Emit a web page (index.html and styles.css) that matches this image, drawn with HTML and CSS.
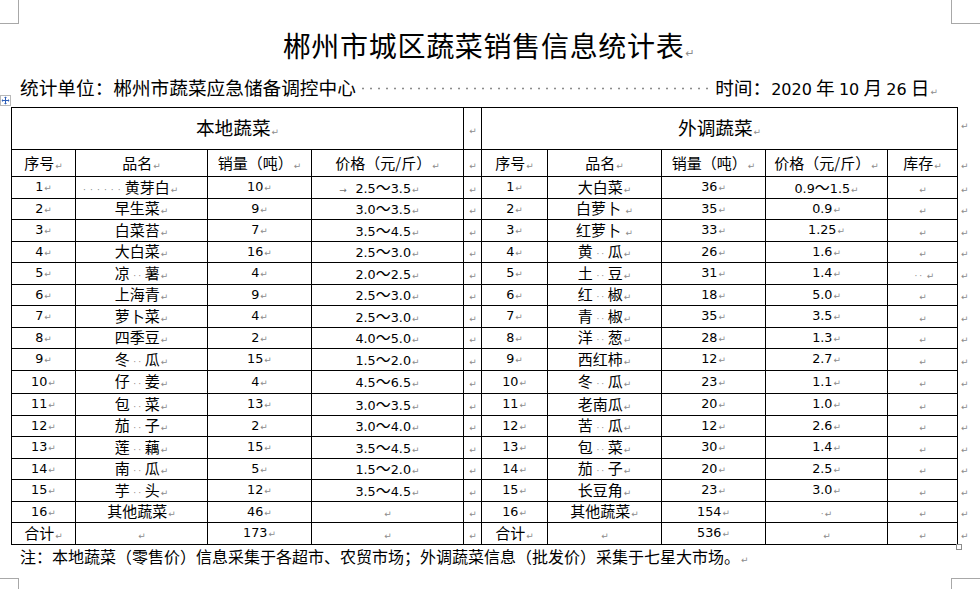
FILE: index.html
```html
<!DOCTYPE html>
<html lang="zh">
<head>
<meta charset="utf-8">
<title>郴州市城区蔬菜销售信息统计表</title>
<link rel="stylesheet" href="styles.css">
</head>
<body>
<div class="page">
  <div class="crop tl"></div>
  <div class="crop tr"></div>
  <div class="crop bl"></div>
  <div class="crop br"></div>

  <h1 class="title">郴州市城区蔬菜销售信息统计表<i class="m mt">↵</i></h1>

  <div class="info">
    <span class="unit">统计单位：郴州市蔬菜应急储备调控中心</span>
    <span class="dots"></span>
    <span class="date">时间：<span class="num">2020</span> 年 <span class="num">10</span> 月 <span class="num">26</span> 日<i class="m">↵</i></span>
  </div>

  <svg class="handle" viewBox="0 0 11 11" width="11" height="11" aria-hidden="true">
    <rect x="0.5" y="0.5" width="10" height="10" fill="#fff" stroke="#b9b9b9"/>
    <path d="M5.5 2.5v6M2.5 5.5h6" stroke="#2f5fb8" stroke-width="1" fill="none"/>
    <path d="M5.5 1.5L4 3h3zM5.5 9.5L4 8h3zM1.5 5.5L3 4v3zM9.5 5.5L8 4v3z" fill="#2f5fb8"/>
  </svg>

  <table class="tbl">
    <colgroup>
      <col class="c1"><col class="c2"><col class="c3"><col class="c4"><col class="c5">
      <col class="c6"><col class="c7"><col class="c8"><col class="c9"><col class="c10"><col class="c11">
    </colgroup>
    <tr class="h1">
      <td colspan="4" class="big">本地蔬菜<i class="m">↵</i></td>
      <td><i class="m">↵</i></td>
      <td colspan="5" class="big">外调蔬菜<i class="m">↵</i></td>
      <td class="e top"><i class="m">↵</i></td>
    </tr>
    <tr class="h2">
      <td>序号<i class="m">↵</i></td><td>品名<i class="m">↵</i></td><td>销量（吨）<i class="m">↵</i></td><td>价格（元/斤）<i class="m">↵</i></td>
      <td><i class="m">↵</i></td>
      <td>序号<i class="m">↵</i></td><td>品名<i class="m">↵</i></td><td>销量（吨）<i class="m">↵</i></td><td>价格（元/斤）<i class="m">↵</i></td><td>库存<i class="m">↵</i></td>
      <td class="e"><i class="m">↵</i></td>
    </tr>
    <tr class="r">
      <td class="n">1<i class="m">↵</i></td><td class="lft"><span class="lead">······</span>黄芽白<i class="m">↵</i></td><td class="n">10<i class="m">↵</i></td><td class="n"><span class="tab">→</span>2.5<span class="t">～</span>3.5<i class="m">↵</i></td>
      <td><i class="m">↵</i></td>
      <td class="n">1<i class="m">↵</i></td><td>大白菜<i class="m">↵</i></td><td class="n">36<i class="m">↵</i></td><td class="n">0.9<span class="t">～</span>1.5<i class="m">↵</i></td><td><i class="m">↵</i></td>
      <td class="e"><i class="m">↵</i></td>
    </tr>
    <tr class="r">
      <td class="n">2<i class="m">↵</i></td><td>早生菜<i class="m">↵</i></td><td class="n">9<i class="m">↵</i></td><td class="n">3.0<span class="t">～</span>3.5<i class="m">↵</i></td>
      <td><i class="m">↵</i></td>
      <td class="n">2<i class="m">↵</i></td><td>白萝卜 <i class="m">↵</i></td><td class="n">35<i class="m">↵</i></td><td class="n">0.9<i class="m">↵</i></td><td><i class="m">↵</i></td>
      <td class="e"><i class="m">↵</i></td>
    </tr>
    <tr class="r">
      <td class="n">3<i class="m">↵</i></td><td>白菜苔<i class="m">↵</i></td><td class="n">7<i class="m">↵</i></td><td class="n">3.5<span class="t">～</span>4.5<i class="m">↵</i></td>
      <td><i class="m">↵</i></td>
      <td class="n">3<i class="m">↵</i></td><td>红萝卜 <i class="m">↵</i></td><td class="n">33<i class="m">↵</i></td><td class="n">1.25<i class="m">↵</i></td><td><i class="m">↵</i></td>
      <td class="e"><i class="m">↵</i></td>
    </tr>
    <tr class="r">
      <td class="n">4<i class="m">↵</i></td><td>大白菜<i class="m">↵</i></td><td class="n">16<i class="m">↵</i></td><td class="n">2.5<span class="t">～</span>3.0<i class="m">↵</i></td>
      <td><i class="m">↵</i></td>
      <td class="n">4<i class="m">↵</i></td><td>黄<span class="s">··</span>瓜<i class="m">↵</i></td><td class="n">26<i class="m">↵</i></td><td class="n">1.6<i class="m">↵</i></td><td><i class="m">↵</i></td>
      <td class="e"><i class="m">↵</i></td>
    </tr>
    <tr class="r">
      <td class="n">5<i class="m">↵</i></td><td>凉<span class="s">··</span>薯<i class="m">↵</i></td><td class="n">4<i class="m">↵</i></td><td class="n">2.0<span class="t">～</span>2.5<i class="m">↵</i></td>
      <td><i class="m">↵</i></td>
      <td class="n">5<i class="m">↵</i></td><td>土<span class="s">··</span>豆<i class="m">↵</i></td><td class="n">31<i class="m">↵</i></td><td class="n">1.4<i class="m">↵</i></td><td><span class="s">··</span><i class="m">↵</i></td>
      <td class="e"><i class="m">↵</i></td>
    </tr>
    <tr class="r">
      <td class="n">6<i class="m">↵</i></td><td>上海青<i class="m">↵</i></td><td class="n">9<i class="m">↵</i></td><td class="n">2.5<span class="t">～</span>3.0<i class="m">↵</i></td>
      <td><i class="m">↵</i></td>
      <td class="n">6<i class="m">↵</i></td><td>红<span class="s">··</span>椒<i class="m">↵</i></td><td class="n">18<i class="m">↵</i></td><td class="n">5.0<i class="m">↵</i></td><td><i class="m">↵</i></td>
      <td class="e"><i class="m">↵</i></td>
    </tr>
    <tr class="r">
      <td class="n">7<i class="m">↵</i></td><td>萝卜菜<i class="m">↵</i></td><td class="n">4<i class="m">↵</i></td><td class="n">2.5<span class="t">～</span>3.0<i class="m">↵</i></td>
      <td><i class="m">↵</i></td>
      <td class="n">7<i class="m">↵</i></td><td>青<span class="s">··</span>椒<i class="m">↵</i></td><td class="n">35<i class="m">↵</i></td><td class="n">3.5<i class="m">↵</i></td><td><i class="m">↵</i></td>
      <td class="e"><i class="m">↵</i></td>
    </tr>
    <tr class="r">
      <td class="n">8<i class="m">↵</i></td><td>四季豆<i class="m">↵</i></td><td class="n">2<i class="m">↵</i></td><td class="n">4.0<span class="t">～</span>5.0<i class="m">↵</i></td>
      <td><i class="m">↵</i></td>
      <td class="n">8<i class="m">↵</i></td><td>洋<span class="s">··</span>葱<i class="m">↵</i></td><td class="n">28<i class="m">↵</i></td><td class="n">1.3<i class="m">↵</i></td><td><i class="m">↵</i></td>
      <td class="e"><i class="m">↵</i></td>
    </tr>
    <tr class="r">
      <td class="n">9<i class="m">↵</i></td><td>冬<span class="s">··</span>瓜<i class="m">↵</i></td><td class="n">15<i class="m">↵</i></td><td class="n">1.5<span class="t">～</span>2.0<i class="m">↵</i></td>
      <td><i class="m">↵</i></td>
      <td class="n">9<i class="m">↵</i></td><td>西红柿<i class="m">↵</i></td><td class="n">12<i class="m">↵</i></td><td class="n">2.7<i class="m">↵</i></td><td><i class="m">↵</i></td>
      <td class="e"><i class="m">↵</i></td>
    </tr>
    <tr class="r tall">
      <td class="n">10<i class="m">↵</i></td><td>仔<span class="s">··</span>姜<i class="m">↵</i></td><td class="n">4<i class="m">↵</i></td><td class="n">4.5<span class="t">～</span>6.5<i class="m">↵</i></td>
      <td><i class="m">↵</i></td>
      <td class="n">10<i class="m">↵</i></td><td>冬<span class="s">··</span>瓜<i class="m">↵</i></td><td class="n">23<i class="m">↵</i></td><td class="n">1.1<i class="m">↵</i></td><td><i class="m">↵</i></td>
      <td class="e"><i class="m">↵</i></td>
    </tr>
    <tr class="r">
      <td class="n">11<i class="m">↵</i></td><td>包<span class="s">··</span>菜<i class="m">↵</i></td><td class="n">13<i class="m">↵</i></td><td class="n">3.0<span class="t">～</span>3.5<i class="m">↵</i></td>
      <td><i class="m">↵</i></td>
      <td class="n">11<i class="m">↵</i></td><td>老南瓜<i class="m">↵</i></td><td class="n">20<i class="m">↵</i></td><td class="n">1.0<i class="m">↵</i></td><td><i class="m">↵</i></td>
      <td class="e"><i class="m">↵</i></td>
    </tr>
    <tr class="r">
      <td class="n">12<i class="m">↵</i></td><td>茄<span class="s">··</span>子<i class="m">↵</i></td><td class="n">2<i class="m">↵</i></td><td class="n">3.0<span class="t">～</span>4.0<i class="m">↵</i></td>
      <td><i class="m">↵</i></td>
      <td class="n">12<i class="m">↵</i></td><td>苦<span class="s">··</span>瓜<i class="m">↵</i></td><td class="n">12<i class="m">↵</i></td><td class="n">2.6<i class="m">↵</i></td><td><i class="m">↵</i></td>
      <td class="e"><i class="m">↵</i></td>
    </tr>
    <tr class="r">
      <td class="n">13<i class="m">↵</i></td><td>莲<span class="s">··</span>藕<i class="m">↵</i></td><td class="n">15<i class="m">↵</i></td><td class="n">3.5<span class="t">～</span>4.5<i class="m">↵</i></td>
      <td><i class="m">↵</i></td>
      <td class="n">13<i class="m">↵</i></td><td>包<span class="s">··</span>菜<i class="m">↵</i></td><td class="n">30<i class="m">↵</i></td><td class="n">1.4<i class="m">↵</i></td><td><i class="m">↵</i></td>
      <td class="e"><i class="m">↵</i></td>
    </tr>
    <tr class="r">
      <td class="n">14<i class="m">↵</i></td><td>南<span class="s">··</span>瓜<i class="m">↵</i></td><td class="n">5<i class="m">↵</i></td><td class="n">1.5<span class="t">～</span>2.0<i class="m">↵</i></td>
      <td><i class="m">↵</i></td>
      <td class="n">14<i class="m">↵</i></td><td>茄<span class="s">··</span>子<i class="m">↵</i></td><td class="n">20<i class="m">↵</i></td><td class="n">2.5<i class="m">↵</i></td><td><i class="m">↵</i></td>
      <td class="e"><i class="m">↵</i></td>
    </tr>
    <tr class="r">
      <td class="n">15<i class="m">↵</i></td><td>芋<span class="s">··</span>头<i class="m">↵</i></td><td class="n">12<i class="m">↵</i></td><td class="n">3.5<span class="t">～</span>4.5<i class="m">↵</i></td>
      <td><i class="m">↵</i></td>
      <td class="n">15<i class="m">↵</i></td><td>长豆角<i class="m">↵</i></td><td class="n">23<i class="m">↵</i></td><td class="n">3.0<i class="m">↵</i></td><td><i class="m">↵</i></td>
      <td class="e"><i class="m">↵</i></td>
    </tr>
    <tr class="r">
      <td class="n">16<i class="m">↵</i></td><td>其他蔬菜<i class="m">↵</i></td><td class="n">46<i class="m">↵</i></td><td><i class="m">↵</i></td>
      <td><i class="m">↵</i></td>
      <td class="n">16<i class="m">↵</i></td><td>其他蔬菜<i class="m">↵</i></td><td class="n">154<i class="m">↵</i></td><td><span class="s1">·</span><i class="m">↵</i></td><td><i class="m">↵</i></td>
      <td class="e"><i class="m">↵</i></td>
    </tr>
    <tr class="r">
      <td>合计<i class="m">↵</i></td><td><i class="m">↵</i></td><td class="n">173<i class="m">↵</i></td><td><i class="m">↵</i></td>
      <td><i class="m">↵</i></td>
      <td>合计<i class="m">↵</i></td><td><i class="m">↵</i></td><td class="n">536<i class="m">↵</i></td><td><i class="m">↵</i></td><td><i class="m">↵</i></td>
      <td class="e"><i class="m">↵</i></td>
    </tr>
  </table>
  <div class="resize"></div>

  <p class="note">注：本地蔬菜（零售价）信息采集于各超市、农贸市场；外调蔬菜信息（批发价）采集于七星大市场。<i class="m">↵</i></p>
</div>
</body>
</html>
```

FILE: styles.css
```css
* { box-sizing: border-box; }
html, body { margin: 0; padding: 0; background: #fff; }
body {
  color: #000;
  font-family: "Noto Sans CJK SC", "Noto Sans", sans-serif;
}
.page {
  position: relative;
  width: 980px;
  height: 589px;
  overflow: hidden;
  background: #fff;
}

/* page corner crop marks */
.crop { position: absolute; border: 0 solid #a8a8a8; }
.crop.tl { left: 0; top: 0; width: 19px; height: 24px; border-right-width: 1px; border-bottom-width: 1px; }
.crop.tr { left: 951px; top: 0; width: 29px; height: 24px; border-left-width: 1px; border-bottom-width: 1px; }
.crop.bl { left: 0; top: 578px; width: 19px; height: 11px; border-right-width: 1px; border-top-width: 1px; }
.crop.br { left: 951px; top: 578px; width: 29px; height: 11px; border-left-width: 1px; border-top-width: 1px; }

/* paragraph marks */
.m {
  font-style: normal;
  font-family: "DejaVu Sans", sans-serif;
  font-size: 9px;
  line-height: 1;
  color: #8c8c8c;
  margin-left: 1px;
}
.mt { font-size: 11px; }

.title {
  margin: 0;
  padding-top: 24px;
  height: 66px;
  width: 978px;
  text-align: center;
  font-size: 28px;
  letter-spacing: 0.7px;
  font-weight: normal;
  line-height: 42px;
  overflow: visible;
  white-space: nowrap;
}

.info {
  display: flex;
  align-items: center;
  margin: 9px 0 0 20px;
  height: 24px;
  width: 918px;
  font-size: 18.67px;
  line-height: 24px;
  white-space: nowrap;
}
.num { font-family: "DejaVu Sans", sans-serif; font-size: 16px; line-height: 1; }
.dots {
  flex: 1;
  height: 3px;
  margin: 2px 6px 0 3px;
  background-image: radial-gradient(circle, #8c8c8c 0.9px, transparent 1.2px);
  background-size: 8px 3px;
}

.handle { position: absolute; left: 0; top: 95px; display: block; }

.tbl {
  border-collapse: collapse;
  table-layout: fixed;
  width: 962px;
  margin: 8px 0 0 11px;
  font-size: 15px;
}
.c1 { width: 64px; }
.c2 { width: 132px; }
.c3 { width: 104px; }
.c4 { width: 152px; }
.c5 { width: 18px; }
.c6 { width: 66px; }
.c7 { width: 114px; }
.c8 { width: 104px; }
.c9 { width: 122px; }
.c10 { width: 70px; }
.c11 { width: 16px; }

.tbl td {
  border: 1px solid #000;
  padding: 0;
  text-align: center;
  vertical-align: middle;
  line-height: 14px;
  white-space: nowrap;
  overflow: visible;
}
.tbl td.e { border: none; text-align: left; padding-left: 2px; }
.tbl td.top { vertical-align: top; padding-top: 8px; }
.tbl td.big { font-size: 18.67px; }
.tbl td.n { font-family: "DejaVu Sans", "Noto Sans CJK SC", sans-serif; font-size: 12.75px; }
.tbl td.lft { text-align: left; padding-left: 7px; }

.h1 { height: 42px; }
.h2 { height: 27px; }
.r { height: 21.5px; }
.r.tall { height: 23.5px; }

.t { font-family: "Noto Sans CJK SC", sans-serif; font-size: 15px; line-height: 1; }
.s {
  display: inline-block;
  width: 15px;
  text-align: center;
  font-family: "DejaVu Sans", sans-serif;
  font-size: 9px;
  line-height: 1;
  letter-spacing: 2px;
  color: #8c8c8c;
  text-indent: 2px;
}
.s1 { font-family: "DejaVu Sans", sans-serif; font-size: 9px; line-height: 1; color: #8c8c8c; }
.lead {
  font-family: "DejaVu Sans", sans-serif;
  font-size: 9px;
  line-height: 1;
  letter-spacing: 4.1px;
  color: #8c8c8c;
}
.tab {
  display: inline-block;
  width: 0;
  text-indent: -25px;
  font-family: "DejaVu Sans", sans-serif;
  font-size: 9px;
  line-height: 1;
  color: #6f6f6f;
}

.resize {
  position: absolute;
  left: 956px;
  top: 544px;
  width: 6px;
  height: 6px;
  border: 1px solid #8c8c8c;
  background: #fff;
}

.note {
  margin: 0 0 0 20px;
  font-size: 16px;
  line-height: 22px;
  white-space: nowrap;
}
```
